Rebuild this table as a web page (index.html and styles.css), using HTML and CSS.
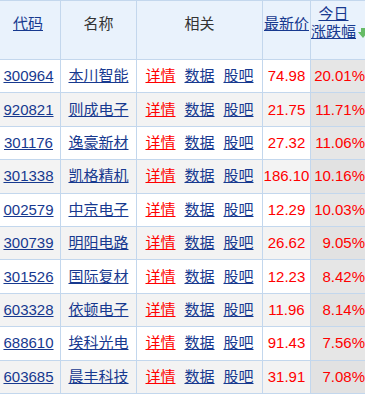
FILE: index.html
```html
<!DOCTYPE html>
<html lang="zh-CN">
<head>
<meta charset="utf-8">
<title>涨跌幅排行</title>
<link rel="stylesheet" href="styles.css">
</head>
<body>
<div class="wrap">
<table class="quotes">
  <colgroup>
    <col class="c-code"><col class="c-name"><col class="c-rel"><col class="c-price"><col class="c-chg">
  </colgroup>
  <thead>
    <tr>
      <th><a href="#">代码</a></th>
      <th>名称</th>
      <th>相关</th>
      <th><a href="#">最新价</a></th>
      <th class="sorted"><a href="#">今日<br>涨跌幅</a><svg class="sort-icon" width="10" height="10" viewBox="0 0 10 10"><path d="M3 0H7V4H10L5 10L0 4H3Z" fill="#66bb66"/></svg></th>
    </tr>
  </thead>
  <tbody>
    <tr><td><a href="#">300964</a></td><td><a href="#">本川智能</a></td><td class="rel"><a class="hot" href="#">详情</a><a href="#">数据</a><a href="#">股吧</a></td><td class="num">74.98</td><td class="chg">20.01%</td></tr>
    <tr><td><a href="#">920821</a></td><td><a href="#">则成电子</a></td><td class="rel"><a class="hot" href="#">详情</a><a href="#">数据</a><a href="#">股吧</a></td><td class="num">21.75</td><td class="chg">11.71%</td></tr>
    <tr><td><a href="#">301176</a></td><td><a href="#">逸豪新材</a></td><td class="rel"><a class="hot" href="#">详情</a><a href="#">数据</a><a href="#">股吧</a></td><td class="num">27.32</td><td class="chg">11.06%</td></tr>
    <tr><td><a href="#">301338</a></td><td><a href="#">凯格精机</a></td><td class="rel"><a class="hot" href="#">详情</a><a href="#">数据</a><a href="#">股吧</a></td><td class="num">186.10</td><td class="chg">10.16%</td></tr>
    <tr><td><a href="#">002579</a></td><td><a href="#">中京电子</a></td><td class="rel"><a class="hot" href="#">详情</a><a href="#">数据</a><a href="#">股吧</a></td><td class="num">12.29</td><td class="chg">10.03%</td></tr>
    <tr><td><a href="#">300739</a></td><td><a href="#">明阳电路</a></td><td class="rel"><a class="hot" href="#">详情</a><a href="#">数据</a><a href="#">股吧</a></td><td class="num">26.62</td><td class="chg">9.05%</td></tr>
    <tr><td><a href="#">301526</a></td><td><a href="#">国际复材</a></td><td class="rel"><a class="hot" href="#">详情</a><a href="#">数据</a><a href="#">股吧</a></td><td class="num">12.23</td><td class="chg">8.42%</td></tr>
    <tr><td><a href="#">603328</a></td><td><a href="#">依顿电子</a></td><td class="rel"><a class="hot" href="#">详情</a><a href="#">数据</a><a href="#">股吧</a></td><td class="num">11.96</td><td class="chg">8.14%</td></tr>
    <tr><td><a href="#">688610</a></td><td><a href="#">埃科光电</a></td><td class="rel"><a class="hot" href="#">详情</a><a href="#">数据</a><a href="#">股吧</a></td><td class="num">91.43</td><td class="chg">7.56%</td></tr>
    <tr><td><a href="#">603685</a></td><td><a href="#">晨丰科技</a></td><td class="rel"><a class="hot" href="#">详情</a><a href="#">数据</a><a href="#">股吧</a></td><td class="num">31.91</td><td class="chg">7.08%</td></tr>
  </tbody>
</table>
</div>
</body>
</html>
```
FILE: styles.css
```css
html, body {
  margin: 0;
  padding: 0;
  background: #ffffff;
  overflow: hidden;
}
.wrap {
  width: 365px;
  height: 394px;
  overflow: hidden;
}
.quotes {
  margin-left: -5px;
  border-collapse: collapse;
  table-layout: fixed;
  width: 371px;
  font-family: "Liberation Sans", "Noto Sans CJK SC", sans-serif;
  font-size: 15px;
  color: #333333;
}
.c-code { width: 65px; }
.c-name { width: 76px; }
.c-rel { width: 126px; }
.c-price { width: 48px; }
.c-chg { width: 56px; }

.quotes th, .quotes td {
  border: 1px solid #c3d7ed;
  padding: 0;
  white-space: nowrap;
}
.quotes th {
  background: #e9f2fc;
  height: 59px;
  font-weight: normal;
  vertical-align: top;
  padding-top: 13px;
  line-height: 20px;
  text-align: center;
  box-sizing: border-box;
}
.quotes th.sorted {
  position: relative;
  padding-top: 4px;
  line-height: 18px;
  padding-right: 10px;
}
.sort-icon {
  position: absolute;
  left: 47px;
  top: 27px;
}
.quotes td {
  height: 32.4px;
  text-align: center;
  vertical-align: middle;
  line-height: 18px;
}
.quotes tbody tr:nth-child(even) td {
  background: #f3f3f3;
}
.quotes tbody td.chg {
  background: #e6e6e6;
  text-align: right;
  padding-right: 1px;
  color: #ff0000;
}
.quotes tbody tr:nth-child(even) td.chg {
  background: #e2e2e2;
}
.quotes td:first-child {
  padding-left: 1px;
}
.num {
  color: #ff0000;
}
a {
  color: #17398f;
  text-decoration: underline;
}
a.hot {
  color: #ff0000;
}
.rel a {
  margin: 0 4px;
}
.rel a + a {
  margin-left: 5px;
}
```
